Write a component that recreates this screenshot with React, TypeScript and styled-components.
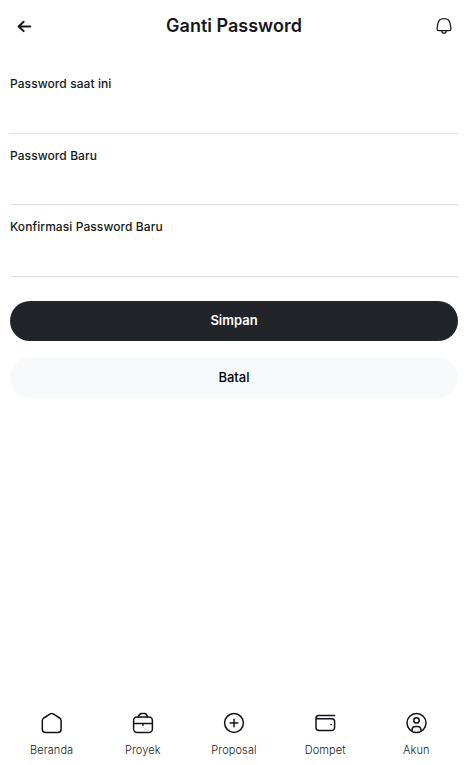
import React from "react";
import styled, { createGlobalStyle } from "styled-components";

const GlobalStyle = createGlobalStyle`
  * { box-sizing: border-box; }
  body {
    margin: 0;
    background: #fff;
    color: #16181b;
    font-family: Inter, "Liberation Sans", sans-serif;
  }
`;

const Screen = styled.div`
  display: flex;
  flex-direction: column;
  width: 468px;
  height: 765px;
  overflow: hidden;
`;

const Header = styled.header`
  display: grid;
  grid-template-columns: 28px 1fr 28px;
  align-items: center;
  height: 52px;
  padding: 0 10px;
`;

const Title = styled.h1`
  margin: 0;
  font-size: 18px;
  line-height: 24px;
  font-weight: 600;
  text-align: center;
`;

const IconButton = styled.button`
  display: flex;
  align-items: center;
  justify-content: center;
  width: 28px;
  height: 28px;
  padding: 0;
  border: 0;
  background: none;
  color: inherit;
`;

const Form = styled.form`
  display: flex;
  flex-direction: column;
  padding: 22px 10px 0;
`;

const Field = styled.label`
  display: flex;
  flex-direction: column;
  height: 71.5px;
`;

const Label = styled.span`
  font-size: 12px;
  line-height: 20px;
  font-weight: 500;
  letter-spacing: 0.08px;
`;

const Input = styled.input`
  height: 39.8px;
  padding: 0;
  border: 0;
  border-bottom: 1px solid #dee2e6;
  border-radius: 0;
  outline: 0;
  background: transparent;
  font: inherit;
`;

const Actions = styled.div`
  display: flex;
  flex-direction: column;
  gap: 16px;
  padding-top: 12.5px;
`;

const Button = styled.button<{ $primary?: boolean }>`
  height: ${(p) => (p.$primary ? "40px" : "41px")};
  padding: 0 0 ${(p) => (p.$primary ? "2px" : "1px")};
  border: 0;
  border-radius: 21px;
  background: ${(p) => (p.$primary ? "#212529" : "#f8f9fb")};
  color: ${(p) => (p.$primary ? "#fff" : "#000")};
  font-family: inherit;
  font-size: 13px;
  font-weight: ${(p) => (p.$primary ? 600 : 500)};
`;

const Nav = styled.nav`
  display: grid;
  grid-template-columns: repeat(5, 1fr);
  margin-top: auto;
  padding: 0 6px 6px;
`;

const NavItem = styled.a`
  display: flex;
  flex-direction: column;
  align-items: center;
  gap: 6px;
  color: #111318;
`;

const NavLabel = styled.span`
  font-size: 11px;
  line-height: 18px;
  font-weight: 300;
  letter-spacing: 0.1px;
  color: #16181b;
`;

const Glyph = styled.svg`
  display: block;
  width: 24px;
  height: 24px;
  fill: none;
  stroke: currentColor;
  stroke-width: 1.5;
  stroke-linecap: round;
  stroke-linejoin: round;
`;

const fields = ["Password saat ini", "Password Baru", "Konfirmasi Password Baru"];

const navItems = [
  {
    label: "Beranda",
    icon: <path d="M3.8 7 10.2 2.9q1.5-.9 3 0L19.6 7q1.5 1 1.5 2.8v8.4q0 3.2-3.2 3.2H5.5q-3.2 0-3.2-3.2V9.8Q2.3 8 3.8 7Z" />,
  },
  {
    label: "Proyek",
    icon: (
      <>
        <rect x="2.6" y="6" width="18.8" height="15.4" rx="3.4" />
        <path d="M7.5 6q.7-3.4 3-3.4h3q2.3 0 3 3.4M2.6 12.5h18.8M12 12.5v1.8" />
      </>
    ),
  },
  {
    label: "Proposal",
    icon: (
      <>
        <circle cx="12" cy="12" r="9.4" />
        <path d="M12 8.2v7.6M8.2 12h7.6" />
      </>
    ),
  },
  {
    label: "Dompet",
    icon: (
      <>
        <path d="M21.6 4.5H5.1A2.1 2.1 0 0 0 3 6.7v9.8a3.2 3.2 0 0 0 3.2 3.1h12.4a3 3 0 0 0 3-3v-6a2.8 2.8 0 0 0-2.8-2.8H5.1a2 2 0 0 1-2-1.5" />
        <circle cx="18.1" cy="13.6" r=".8" fill="currentColor" stroke="none" />
      </>
    ),
  },
  {
    label: "Akun",
    icon: (
      <>
        <circle cx="12.5" cy="12" r="9.5" />
        <circle cx="12.5" cy="9.4" r="2.7" />
        <path d="M8 20v-1.1c.2-2.2 1.7-3.4 3.5-3.4h2c1.8 0 3.3 1.2 3.5 3.4V20" />
      </>
    ),
  },
];

export default function App() {
  return (
    <>
      <GlobalStyle />
      <Screen>
        <Header>
          <IconButton aria-label="Kembali">
            <Glyph viewBox="0 0 24 24">
              <path strokeWidth="2" d="M18.3 12.4H6.6M11.6 7.7l-5 4.7 5 4.7" />
            </Glyph>
          </IconButton>
          <Title>Ganti Password</Title>
          <IconButton aria-label="Notifikasi">
            <Glyph viewBox="0 0 24 24">
              <path strokeWidth="1.25" d="M6.9 16.6h10.2q1.8 0 1.8-1.6l-.6-4.8C17.9 6.6 15.4 4.6 12 4.6S6.1 6.6 5.7 10.2L5.1 15q0 1.6 1.8 1.6ZM9.6 16.8q.5 2.4 2.4 2.4t2.4-2.4" />
            </Glyph>
          </IconButton>
        </Header>
        <Form>
          {fields.map((label) => (
            <Field key={label}>
              <Label>{label}</Label>
              <Input type="password" />
            </Field>
          ))}
          <Actions>
            <Button type="submit" $primary>Simpan</Button>
            <Button type="button">Batal</Button>
          </Actions>
        </Form>
        <Nav>
          {navItems.map(({ label, icon }) => (
            <NavItem key={label}>
              <Glyph viewBox="0 0 24 24">{icon}</Glyph>
              <NavLabel>{label}</NavLabel>
            </NavItem>
          ))}
        </Nav>
      </Screen>
    </>
  );
}
